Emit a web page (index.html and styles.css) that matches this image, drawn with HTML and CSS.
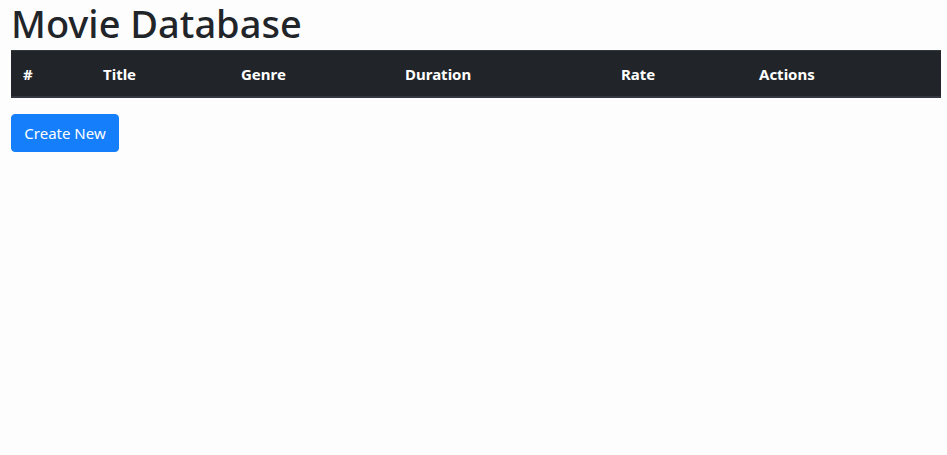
FILE: index.html
```html
<!DOCTYPE html>
<html lang="en">
<head>
<meta charset="utf-8">
<title>Movie Database</title>
<link rel="stylesheet" href="styles.css">
</head>
<body>
<div class="page">
  <h1 class="title">Movie Database</h1>
  <table class="movies">
    <thead>
      <tr>
        <th class="c-num">#</th>
        <th class="c-title">Title</th>
        <th class="c-genre">Genre</th>
        <th class="c-duration">Duration</th>
        <th class="c-rate">Rate</th>
        <th class="c-actions">Actions</th>
      </tr>
    </thead>
    <tbody></tbody>
  </table>
  <button class="btn-create" type="button">Create New</button>
</div>
</body>
</html>
```

FILE: styles.css
```css
html, body {
  margin: 0;
  padding: 0;
  background: #fdfdfd;
}
body {
  font-family: "Noto Sans", "Open Sans", sans-serif;
  font-size: 16px;
  line-height: 1.5;
  color: #212529;
}
.page {
  padding: 0 6px 0 11px;
}
.title {
  margin: 0;
  font-size: 38px;
  font-weight: 500;
  line-height: 46px;
  height: 50px;
  box-sizing: border-box;
}
.movies {
  width: 930px;
  border-collapse: collapse;
  margin-bottom: 16px;
  table-layout: fixed;
}
.movies th {
  box-sizing: border-box;
  background: #212529;
  color: #fff;
  font-weight: 700;
  font-size: 15px;
  text-align: left;
  padding: 11px 12px 10px 12px;
  line-height: 24px;
  border-top: 1px solid #32383e;
  border-bottom: 2px solid #32383e;
}
.c-num { width: 80px; }
.c-title { width: 138px; }
.c-genre { width: 164px; }
.c-duration { width: 216px; }
.c-rate { width: 138px; }
.c-actions { width: 194px; }
.btn-create {
  display: block;
  font-family: inherit;
  font-size: 15px;
  line-height: 24px;
  color: #fff;
  background: #147efb;
  border: 1px solid #147efb;
  border-radius: 4px;
  padding: 6px 12px;
  width: 108px;
  height: 38px;
  box-sizing: border-box;
  text-align: center;
}
```
